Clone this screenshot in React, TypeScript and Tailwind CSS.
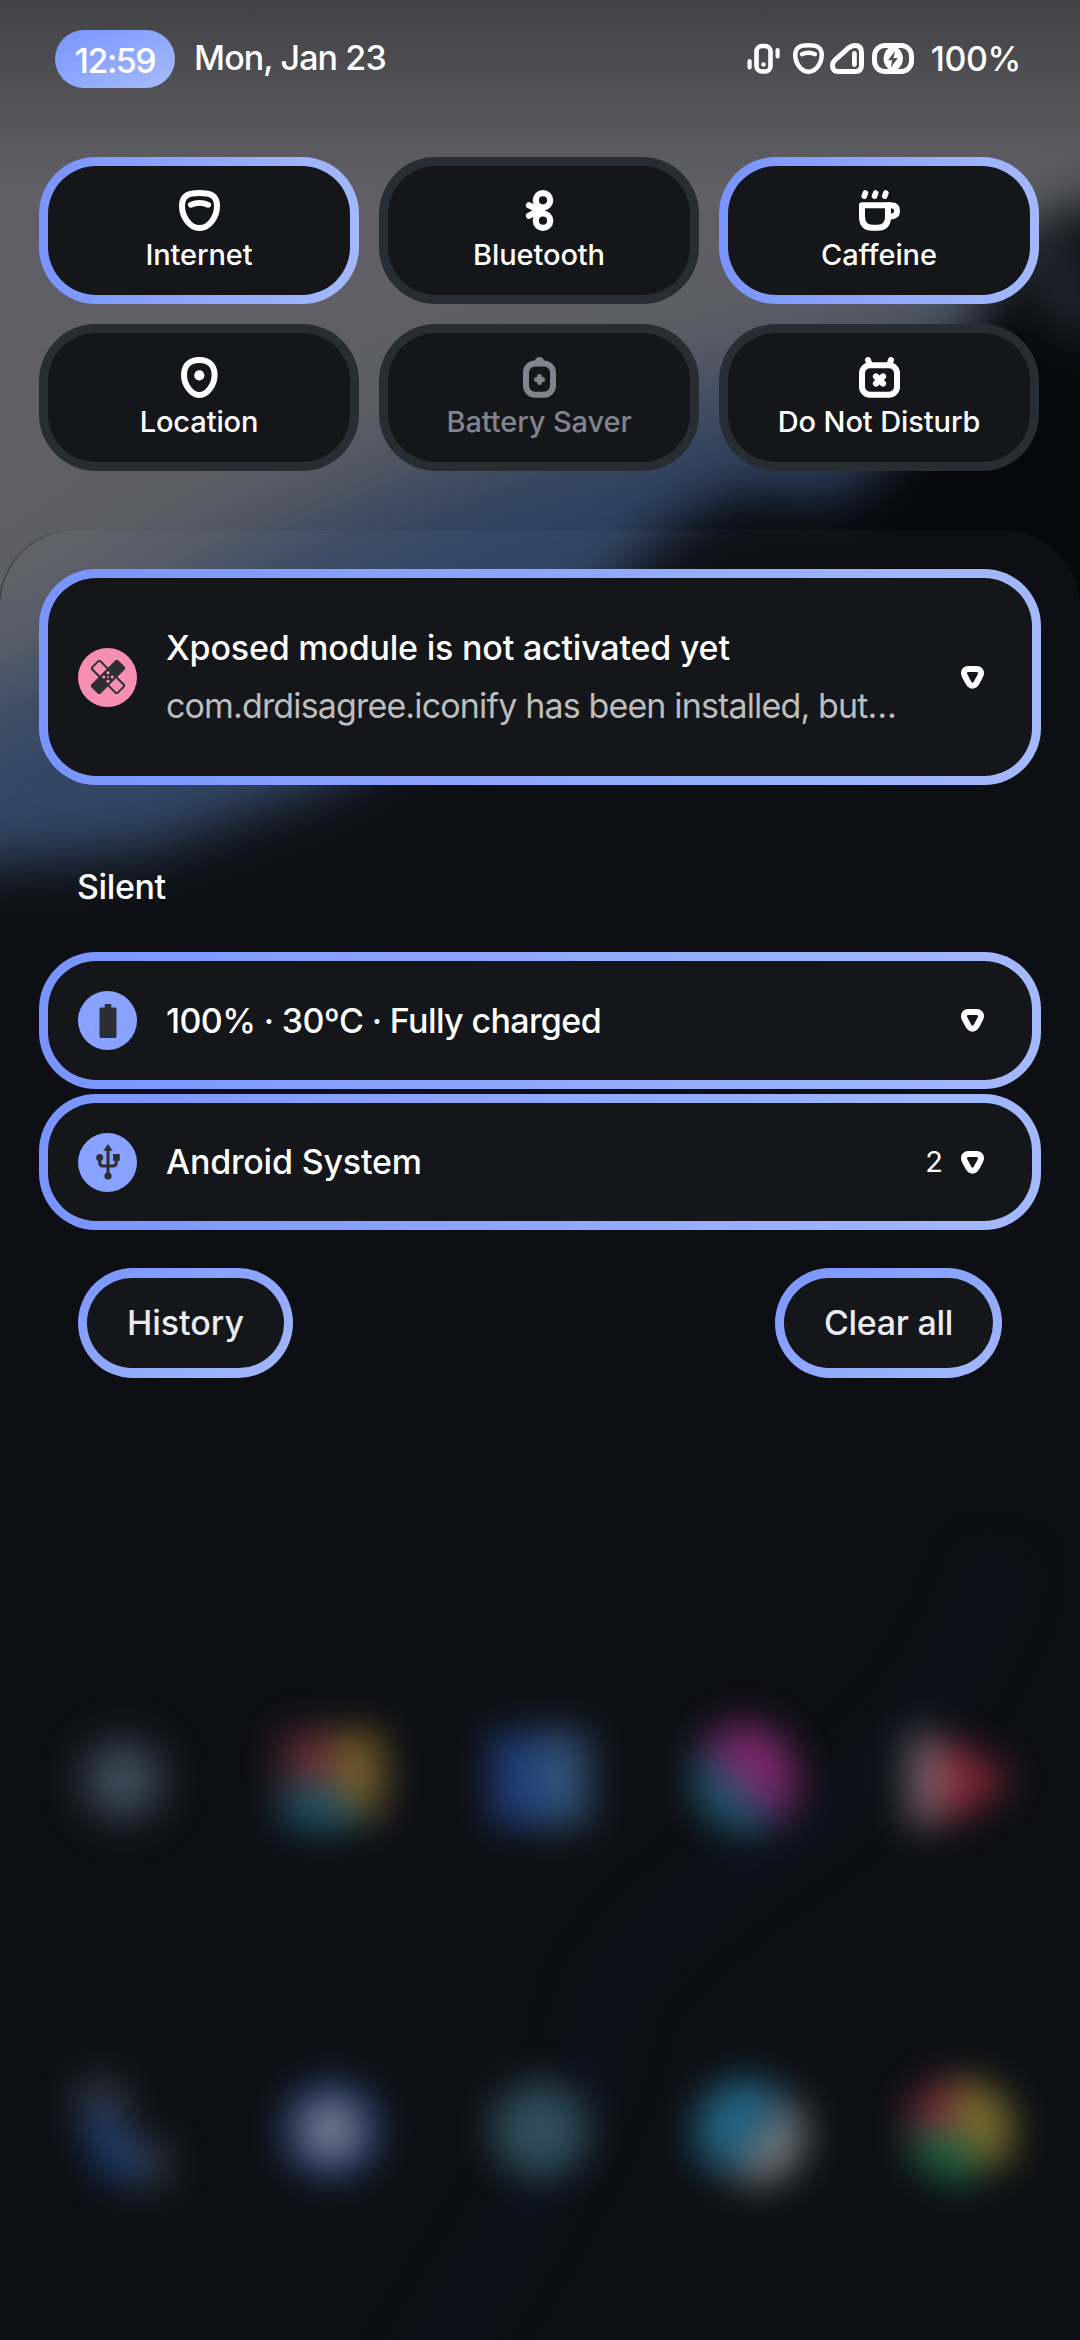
import React from "react";

type IconProps = { className?: string };

function ShieldWifi({ className }: IconProps) {
  return (
    <svg viewBox="0 0 41 41" className={className} fill="none" stroke="currentColor" strokeWidth="6" strokeLinecap="round">
      <path d="M20.500 3C10 3 3 5 3 16c0 10.500 7.500 22 17.500 22S38 26.500 38 16C38 5 31 3 20.500 3Z" />
      <path d="M11.800 14.800q8.700-4 17.400 0" strokeWidth="5.800" />
    </svg>
  );
}

function BluetoothIcon({ className }: IconProps) {
  return (
    <svg viewBox="0 0 41 41" className={className} fill="none" stroke="currentColor" strokeWidth="6.200" strokeLinecap="round">
      <circle cx="24" cy="10.300" r="7.200" />
      <circle cx="24" cy="30.700" r="7.200" />
      <path d="M10 15.300l10 5.200M10 25.700l10-5.200M19 20.500h4" />
    </svg>
  );
}

function CupIcon({ className }: IconProps) {
  return (
    <svg viewBox="0 0 41 41" className={className} fill="none" stroke="currentColor" strokeWidth="6" strokeLinecap="round" strokeLinejoin="round">
      <path d="M6.400 3l-1.200 3.200M16.700 3l-1.200 3.200M26.900 3l-1.200 3.200" strokeWidth="5.600" />
      <path d="M3 15.200h26v11.500q0 11-10.500 11h-5Q3 37.700 3 26.700Z" />
      <path d="M29 15.200h3q6 0 6 5.600t-6 5.600h-3" />
    </svg>
  );
}

function PinIcon({ className }: IconProps) {
  return (
    <svg viewBox="0 0 41 41" className={className} fill="none" stroke="currentColor" strokeWidth="6">
      <path d="M20.300 3C10.500 3 5 8.500 5 18c0 9.500 7 20 15.300 20s15.300-10.500 15.300-20c0-9.500-5.500-15-15.300-15Z" />
      <circle cx="20.300" cy="18.400" r="5.100" fill="currentColor" stroke="none" />
    </svg>
  );
}

function BatterySaverIcon({ className }: IconProps) {
  return (
    <svg viewBox="0 0 41 41" className={className} fill="none" stroke="currentColor" strokeWidth="6" strokeLinecap="round">
      <rect x="7" y="6.500" width="27" height="31.200" rx="9" />
      <path d="M15 5Q17 0 20.500 0T26 5Z" fill="currentColor" stroke="none" />
      <path d="M20.500 19.500v6M17.500 22.500h6" strokeWidth="5" />
    </svg>
  );
}

function DndIcon({ className }: IconProps) {
  return (
    <svg viewBox="0 0 41 41" className={className} fill="none" stroke="currentColor" strokeWidth="6" strokeLinecap="round">
      <rect x="3" y="8.200" width="35" height="29.500" rx="8" />
      <path d="M9 3l1.500 4M32 3l-1.500 4" />
      <path d="M17 19.500l7 7M24 19.500l-7 7" strokeWidth="6.200" />
    </svg>
  );
}

function ExpandIcon() {
  return (
    <svg viewBox="0 0 23 23" className="h-[23px] w-[23px]" fill="none" stroke="white" strokeWidth="6" strokeLinejoin="round">
      <path d="M7.500 3h8c4 0 5.500 3.500 3.700 7l-3.200 6c-2.500 5-6.500 5-9 0L3.800 10C2 6.500 3.500 3 7.500 3Z" />
    </svg>
  );
}

function VibrateIcon() {
  return (
    <svg viewBox="0 0 33 31" className="h-[31px] w-[33px]" fill="none" stroke="white" strokeLinecap="round">
      <rect x="9.500" y="3" width="14" height="25.500" rx="5.500" strokeWidth="4.600" />
      <path d="M2.600 18v6.500M30.600 7v6.500" strokeWidth="4.200" />
      <circle cx="16.500" cy="21.500" r="2.200" fill="white" stroke="none" />
    </svg>
  );
}

function SignalIcon() {
  return (
    <svg viewBox="0 0 34 31" className="h-[31px] w-[34px]" fill="none" stroke="white" strokeLinecap="round">
      <path d="M8.500 28.500h16.500q6.500 0 6.500-6.500V9.500q0-7-6.500-7q-3.500 0-6.500 2.500L5 17Q2.500 19.500 2.500 22.500Q2.500 28.500 8.500 28.500Z" strokeWidth="5" />
      <path d="M24.400 10.500v11" strokeWidth="4.800" />
    </svg>
  );
}

function BatteryIcon() {
  return (
    <svg viewBox="0 0 42 31" className="h-[31px] w-[42px]" fill="none" stroke="white">
      <rect x="2.500" y="2.500" width="37" height="26" rx="10.500" strokeWidth="5" />
      <path d="M17.500 4Q11.500 9 11.500 15.500T17.500 27h7.500q6-5 6-11.500T25 4Z" fill="white" stroke="none" />
      <path d="M23 8l-7 9.200h4.200l-1.400 7.600 7-9.800h-4.400Z" fill="#505156" stroke="none" />
    </svg>
  );
}

function Tile({ active, dim, label, children }: { active?: boolean; dim?: boolean; label: string; children: React.ReactNode }) {
  return (
    <div className={"h-[147px] rounded-[57px] p-[9px] " + (active ? "bg-linear-to-r from-[#7a94ff] to-[#a4b9fb]" : "bg-[#282d33]")}>
      <div className={"flex h-full flex-col items-center rounded-[48px] bg-[#141619] pt-6 " + (dim ? "text-[#81848e]" : "text-white")}>
        {children}
        <span className="mt-[6px] text-[29px] leading-[36px] font-medium tracking-[-0.1px] whitespace-nowrap">{label}</span>
      </div>
    </div>
  );
}

function Card({ className, icon, title, body, count }: { className: string; icon: React.ReactNode; title: React.ReactNode; body?: React.ReactNode; count?: string }) {
  return (
    <div className={"rounded-[57px] bg-linear-to-r from-[#7a94ff] to-[#a4b9fb] p-[9px] " + className}>
      <div className="flex h-full items-center rounded-[48px] bg-[#141619] pr-[48px] pl-[30px]">
        {icon}
        <div className="ml-[29px] flex flex-1 flex-col">
          {title}
          {body}
        </div>
        {count && <span className="mr-[18px] text-[29px] leading-[36px] text-white">{count}</span>}
        <ExpandIcon />
      </div>
    </div>
  );
}

function Wallpaper() {
  return (
    <svg className="absolute inset-0 h-[2340px] w-[1080px]" viewBox="0 0 1080 2340" aria-hidden="true">
      <defs>
        <filter id="b50" x="-30%" y="-30%" width="160%" height="160%" colorInterpolationFilters="sRGB"><feGaussianBlur stdDeviation="56" /></filter>
        <filter id="b26" x="-60%" y="-60%" width="220%" height="220%" colorInterpolationFilters="sRGB"><feGaussianBlur stdDeviation="27" /></filter>
        <filter id="b19" x="-20%" y="-20%" width="140%" height="140%" colorInterpolationFilters="sRGB"><feGaussianBlur stdDeviation="19" /></filter>
        <linearGradient id="top" x1="0" y1="0" x2="0" y2="1">
          <stop offset="0" stopColor="#000" stopOpacity="0.300" />
          <stop offset="1" stopColor="#000" stopOpacity="0" />
        </linearGradient>
      </defs>
      <rect width="1080" height="2340" fill="#5f5f65" />
      <path d="M1250 260L960 325 740 385 520 435 380 490 200 570 90 650-100 720V1100H1250Z" fill="#2e415f" filter="url(#b50)" />
      <path d="M1250 180L1070 210 1010 255 980 320 920 400 870 480 820 500 750 490 680 520 570 625 330 785 150 850-120 875V2500H1250Z" fill="#07080c" filter="url(#b26)" />
      <ellipse cx="1065" cy="285" rx="28" ry="60" fill="#2b2c38" filter="url(#b26)" transform="rotate(-30 1065 285)" />
      <rect width="1080" height="190" fill="url(#top)" />
      <path d="M1000 1560Q960 1720 780 1840T600 2030T420 2380" fill="none" stroke="#060a13" strokeWidth="50" filter="url(#b19)" />
      <g filter="url(#b19)" opacity="0.920">
        <circle cx="123" cy="1780" r="45" fill="#2b323d" />
        <circle cx="123" cy="1780" r="22" fill="#485e70" />
        <path d="M283 1822V1732h54l-6 48Z" fill="#6a2733" />
        <path d="M331 1733h52v82h-32l-20-40Z" fill="#7e6225" />
        <path d="M283 1785h48l36 42h-84Z" fill="#1d5a70" />
        <rect x="492" y="1732" width="50" height="94" fill="#1d3d80" />
        <rect x="540" y="1732" width="48" height="94" fill="#32557e" />
        <path d="M703 1742q42-34 79-2 30 50 0 82L740 1785Z" fill="#862470" />
        <path d="M700 1745l77 82q-42 12-64-8-30-32-13-74Z" fill="#1f5f7c" />
        <path d="M909 1731l34 10v78l-34 10Z" fill="#7d6e76" />
        <path d="M940 1736l72 44-72 46Z" fill="#962535" />
        <path d="M78 2080h44l8 55 38 12v38h-38Q74 2150 78 2080Z" fill="#323a46" />
        <path d="M80 2112h32l35 62-34 10Q84 2150 80 2112Z" fill="#193a70" />
        <circle cx="331" cy="2130" r="48" fill="#24427a" />
        <circle cx="331" cy="2130" r="28" fill="#8a8896" />
        <circle cx="540" cy="2130" r="48" fill="#2f4f5e" />
        <path d="M696 2130a50 50 0 0 1 87-34l-58 81a50 50 0 0 1-29-47Z" fill="#1f6a8c" />
        <path d="M788 2096a50 50 0 0 1-56 82Z" fill="#7c8487" />
        <path d="M908 2130a50 50 0 0 1 50-50l10 50Z" fill="#8a2738" />
        <path d="M955 2081a50 50 0 0 1 34 92l-31-43Z" fill="#867629" />
        <path d="M908 2130h50l24 46a50 50 0 0 1-74-46Z" fill="#1a6640" />
      </g>
    </svg>
  );
}

export default function App() {
  return (
    <div className="relative h-[2340px] w-[1080px] overflow-hidden bg-[#0e0f13] font-['Inter',sans-serif] text-white">
      <Wallpaper />
      <div className="relative flex h-full flex-col">
        <header className="flex h-[88px] items-start pt-[30px] pr-[59px] pl-[55px]">
          <div className="flex h-[58px] w-[120px] items-center justify-center rounded-full bg-linear-to-br from-[#7a94ff] to-[#a6bbf9]">
            <span className="mt-[3px] text-[34px] leading-[58px] font-medium tracking-[-1.5px]">12:59</span>
          </div>
          <span className="ml-[19px] text-[34px] leading-[55px] font-medium tracking-[-0.9px]">Mon, Jan 23</span>
          <div className="mt-[13px] ml-auto flex items-center">
            <VibrateIcon />
            <ShieldWifi className="ml-[13px] h-[31px] w-[31px]" />
            <span className="w-[6px]" />
            <SignalIcon />
            <span className="w-[8px]" />
            <BatteryIcon />
            <span className="ml-[17px] text-[34px] leading-[31px] font-medium tracking-[-0.4px]">100%</span>
          </div>
        </header>

        <section className="mt-[69px] ml-[39px] grid w-[1000px] grid-cols-3 gap-5">
          <Tile active label="Internet"><ShieldWifi className="h-[41px] w-[41px]" /></Tile>
          <Tile label="Bluetooth"><BluetoothIcon className="h-[41px] w-[41px]" /></Tile>
          <Tile active label="Caffeine"><CupIcon className="h-[41px] w-[41px]" /></Tile>
          <Tile label="Location"><PinIcon className="h-[41px] w-[41px]" /></Tile>
          <Tile dim label="Battery Saver"><BatterySaverIcon className="h-[41px] w-[41px]" /></Tile>
          <Tile label="Do Not Disturb"><DndIcon className="h-[41px] w-[41px]" /></Tile>
        </section>

        <main className="mt-[59px] flex flex-1 flex-col rounded-t-[76px] bg-[#d0dcff]/[0.035] px-[39px] pt-[39px] shadow-[-1px_0_1px_rgba(0,0,0,0.45)]">
          <Card
            className="h-[216px]"
            icon={
              <span className="flex h-[59px] w-[59px] items-center justify-center rounded-full bg-[#f78fb3]">
                <svg viewBox="0 0 34 34" className="h-[34px] w-[34px]">
                  <g transform="rotate(45 17 17)">
                    <rect x="-1" y="11.200" width="36" height="11.600" rx="1" fill="none" stroke="#2c2e33" strokeWidth="2" />
                    <rect x="10.500" y="-2" width="13" height="38" rx="1.500" fill="#2c2e33" />
                  </g>
                  <g fill="#f78fb3">
                    <circle cx="17" cy="12.800" r="1.600" />
                    <circle cx="17" cy="21.200" r="1.600" />
                    <circle cx="12.800" cy="17" r="1.600" />
                    <circle cx="21.200" cy="17" r="1.600" />
                    <circle cx="17" cy="17" r="1" />
                  </g>
                </svg>
              </span>
            }
            title={<span className="text-[34px] leading-[58px] font-medium tracking-[-0.2px] whitespace-nowrap">Xposed module is not activated yet</span>}
            body={<span className="text-[34px] leading-[58px] tracking-[-0.85px] whitespace-nowrap text-[#bdbdbe]">com.drdisagree.iconify has been installed, but…</span>}
          />
          <h2 className="mt-[73px] ml-[38px] text-[34px] leading-[58px] font-medium tracking-[-0.4px]">Silent</h2>
          <Card
            className="mt-[36px] h-[137px]"
            icon={
              <span className="flex h-[59px] w-[59px] items-center justify-center rounded-full bg-[#8aa2ff]">
                <svg viewBox="0 0 18 34" className="h-[34px] w-[18px]" fill="#2c2e33">
                  <path d="M5.700 0h6.600v3.500H16q1.500 0 1.500 1.500v27.500q0 1.500-1.500 1.500H2Q.5 34 .5 32.500V5Q.5 3.500 2 3.500h3.700Z" />
                </svg>
              </span>
            }
            title={<span className="text-[34px] leading-[58px] font-medium tracking-[-0.62px] whitespace-nowrap">100% · 30ºC · Fully charged</span>}
          />
          <Card
            className="mt-[5px] h-[136px]"
            count="2"
            icon={
              <span className="flex h-[59px] w-[59px] items-center justify-center rounded-full bg-[#8aa2ff]">
                <svg viewBox="0 0 24 36" className="h-[36px] w-[24px]" fill="#2c2e33">
                  <path d="M12 0l4.700 6.700h-9.400Z" />
                  <circle cx="12" cy="32" r="3.600" />
                  <circle cx="3.700" cy="13.500" r="3.500" />
                  <rect x="17" y="10" width="6.800" height="6.800" />
                  <path d="M12 5v26M3.700 13v5.500q0 3.500 3.500 3.500h9.600q3.500 0 3.500-3.500V15" fill="none" stroke="#2c2e33" strokeWidth="3" />
                </svg>
              </span>
            }
            title={<span className="text-[34px] leading-[58px] font-medium tracking-[-0.2px] whitespace-nowrap">Android System</span>}
          />
          <div className="mt-[38px] flex justify-between px-[39px] text-[34px] font-medium text-[#ebebf0]">
            <div className="h-[110px] w-[215px] rounded-full bg-linear-to-br from-[#7a94ff] to-[#a4b9fb] px-[9px] py-[10px]">
              <div className="flex h-full items-center justify-center rounded-full bg-[#141619] pb-[2px]">History</div>
            </div>
            <div className="h-[110px] w-[227px] rounded-full bg-linear-to-br from-[#7a94ff] to-[#a4b9fb] px-[9px] py-[10px]">
              <div className="flex h-full items-center justify-center rounded-full bg-[#141619] pb-[2px] tracking-[-0.3px]">Clear all</div>
            </div>
          </div>
        </main>
      </div>
    </div>
  );
}
